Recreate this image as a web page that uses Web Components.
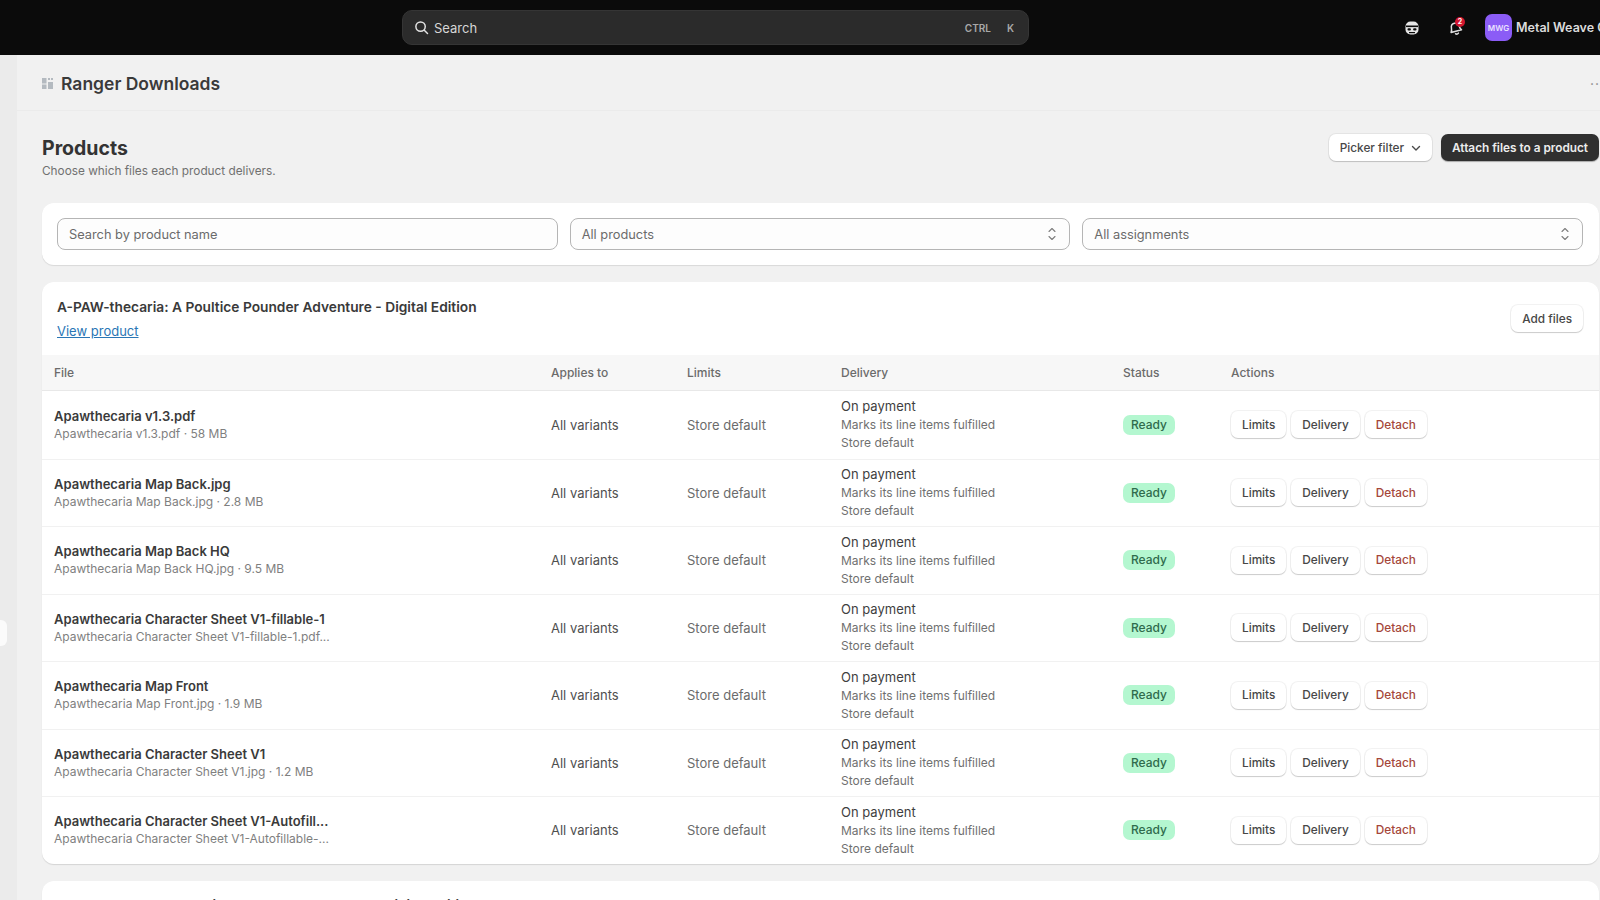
<!DOCTYPE html>
<html lang="en">
<head>
<meta charset="utf-8">
<title>Ranger Downloads</title>
<style>
    html, body { margin: 0; height: 100%; overflow: hidden; background: #f1f1f1; }
    body { font-family: Inter, "Liberation Sans", sans-serif; color: #303030; }
</style>
</head>
<body>
<app-shell>
    <top-bar slot="top"></top-bar>
    <page-header title="Ranger Downloads"></page-header>
    <page-title></page-title>
    <filter-bar></filter-bar>
    <product-card id="first" title="A-PAW-thecaria: A Poultice Pounder Adventure - Digital Edition"></product-card>
    <product-card title="ABC: An Unlabeled Subject, Dungeon Monsters - Digital Edition"></product-card>
</app-shell>

<script>
const ICONS = {
    search: '<svg width="15" height="15" viewBox="0 0 16 16" fill="none" stroke="#e3e3e3" stroke-width="1.6" stroke-linecap="round"><circle cx="7" cy="7" r="5"/><path d="M11 11l3.4 3.4"/></svg>',
    chevron: '<svg width="10" height="10" viewBox="0 0 10 10" fill="none" stroke="#4a4a4a" stroke-width="1.4" stroke-linecap="round" stroke-linejoin="round"><path d="M1.5 3.5L5 7l3.5-3.5"/></svg>',
    updown: '<svg width="10" height="16" viewBox="0 0 10 16" fill="none" stroke="#7d7d7d" stroke-width="1.1" stroke-linecap="round" stroke-linejoin="round"><path d="M2 5.5L5 2.5l3 3M2 10.5l3 3 3-3"/></svg>',
    mask: '<svg width="16" height="16" viewBox="0 0 16 16"><rect x="1.5" y="1.5" width="13" height="13" rx="5" fill="#e6e6e6"/><rect x="2" y="5.5" width="12" height="1.6" fill="#0b0b0b"/><rect x="3.5" y="8.2" width="3.4" height="2.2" rx="1" fill="#0b0b0b"/><rect x="9.1" y="8.2" width="3.4" height="2.2" rx="1" fill="#0b0b0b"/><rect x="5" y="12" width="6" height="1.2" fill="#0b0b0b"/></svg>',
    bell: '<svg width="17" height="17" viewBox="0 0 17 17" fill="none" stroke="#dedede" stroke-width="1.5" stroke-linejoin="round" stroke-linecap="round" style="transform: rotate(-14deg)"><path d="M3 12.2c1-1.2 1.3-2.2 1.4-4 .1-2.4 1.8-4 4-4s3.9 1.6 4 4c.1 1.8.4 2.8 1.4 4z"/><path d="M7 14.6c.8.7 2.2.7 3 0"/></svg>',
    store: '<svg width="13" height="13" viewBox="0 0 13 13" fill="#b4bac0"><rect x="1" y="1" width="4.5" height="5.5"/><rect x="7" y="1" width="2" height="2"/><rect x="10" y="1" width="2" height="2"/><rect x="1" y="7.5" width="4.5" height="4.5"/><rect x="7" y="5" width="5" height="7"/></svg>'
};

const FILES = [
    ['Apawthecaria v1.3.pdf', 'Apawthecaria v1.3.pdf · 58 MB'],
    ['Apawthecaria Map Back.jpg', 'Apawthecaria Map Back.jpg · 2.8 MB'],
    ['Apawthecaria Map Back HQ', 'Apawthecaria Map Back HQ.jpg · 9.5 MB'],
    ['Apawthecaria Character Sheet V1-fillable-1', 'Apawthecaria Character Sheet V1-fillable-1.pdf...'],
    ['Apawthecaria Map Front', 'Apawthecaria Map Front.jpg · 1.9 MB'],
    ['Apawthecaria Character Sheet V1', 'Apawthecaria Character Sheet V1.jpg · 1.2 MB'],
    ['Apawthecaria Character Sheet V1-Autofill...', 'Apawthecaria Character Sheet V1-Autofillable-...']
];

// same columns for the head and the rows
const COLUMNS = 'grid-template-columns: 497px 136px 154px 282px 108px 1fr;';

class AppShell extends HTMLElement {
    constructor() {
        super();
        const shadow = this.attachShadow({ mode: 'open' });
        shadow.innerHTML = `
            <style>
                :host { display: flex; flex-direction: column; height: 900px; overflow: hidden; }
                .body { display: flex; flex: 1; min-height: 0; }
                .rail { width: 17px; flex: none; background: #ebebeb; display: flex; flex-direction: column; }
                .rail i { display: block; width: 7px; height: 26px; margin-top: 565px; background: #fbfbfb; border-radius: 0 6px 6px 0; }
                main { flex: 1; min-width: 0; }
            </style>
            <slot name="top"></slot>
            <div class="body">
                <div class="rail"><i></i></div>
                <main><slot></slot></main>
            </div>
        `;
    }
}

class TopBar extends HTMLElement {
    constructor() {
        super();
        const shadow = this.attachShadow({ mode: 'open' });
        shadow.innerHTML = `
            <style>
                :host { display: flex; align-items: center; height: 55px; background: #0b0b0b; padding-left: 402px; overflow: hidden; }
                .search { width: 627px; height: 35px; box-sizing: border-box; flex: none; display: flex; align-items: center; gap: 5px;
                    padding: 0 14px 0 11px; background: #2b2b2b; border: 1px solid #353535; border-radius: 10px; color: #d6d6d6; font-size: 13px; }
                .search span { flex: 1; }
                kbd { font: 600 10px Inter, "Liberation Sans", sans-serif; color: #a8a8a8; margin-left: 11px; }
                .end { display: flex; align-items: center; margin-left: 375px; flex: none; }
                .bell { position: relative; display: flex; margin-left: 27px; }
                .bell b { position: absolute; top: -2px; left: 8px; width: 10px; height: 10px; border-radius: 50%; background: #d3162f;
                    color: #fff; font-size: 7px; line-height: 10px; text-align: center; }
                .avatar { width: 27px; height: 27px; margin-left: 21px; border-radius: 7px; background: #8b5cf6; color: #e9e0ff;
                    font-size: 8px; font-weight: 600; display: flex; align-items: center; justify-content: center; }
                .shop { margin-left: 4px; color: #dcdcdc; font-size: 12.5px; font-weight: 600; white-space: nowrap; }
            </style>
            <div class="search">
                ${ICONS.search}
                <span>Search</span>
                <kbd>CTRL</kbd><kbd>K</kbd>
            </div>
            <div class="end">
                ${ICONS.mask}
                <div class="bell">${ICONS.bell}<b>2</b></div>
                <div class="avatar">MWG</div>
                <div class="shop">Metal Weave Games</div>
            </div>
        `;
    }
}

class PageHeader extends HTMLElement {
    constructor() {
        super();
        const shadow = this.attachShadow({ mode: 'open' });
        shadow.innerHTML = `
            <style>
                :host { display: flex; align-items: center; height: 56px; box-sizing: border-box; padding: 2px 0 0 24px; border-bottom: 1px solid #ebebeb; margin-bottom: 24px; }
                .icon { display: flex; width: 13px; }
                h1 { margin: 0 0 0 7px; font-size: 17.5px; font-weight: 600; color: #3a3a3a; }
                .more { margin-left: auto; margin-right: -5px; color: #8a8a8a; font-size: 14px; letter-spacing: 1px; line-height: 1; }
            </style>
            <div class="icon">${ICONS.store}</div>
            <h1></h1>
            <div class="more">···</div>
        `;
        shadow.querySelector('h1').textContent = this.getAttribute('title');
    }
}

class UiButton extends HTMLElement {
    constructor() {
        super();
        const shadow = this.attachShadow({ mode: 'open' });
        shadow.innerHTML = `
            <style>
                :host { display: inline-flex; }
                button { display: flex; align-items: center; gap: 7px; height: 27px; padding: 0 11px; background: #fff; color: #474747;
                    border: 0; border-radius: 7px; font: 500 11.8px Inter, "Liberation Sans", sans-serif; white-space: nowrap;
                    box-shadow: 0 1px 1px rgba(0,0,0,.16), 0 0 0 1px rgba(0,0,0,.05); cursor: pointer; }
                :host([tone="primary"]) button { background: #303030; color: #ececec; box-shadow: 0 1px 1px rgba(0,0,0,.3); font-weight: 600; }
                :host([tone="danger"]) button { color: #a5473a; }
            </style>
            <button><slot></slot></button>
        `;
    }
}

class PageTitle extends HTMLElement {
    constructor() {
        super();
        const shadow = this.attachShadow({ mode: 'open' });
        shadow.innerHTML = `
            <style>
                :host { display: flex; justify-content: space-between; padding: 0 1px 0 25px; height: 68px; }
                h2 { margin: 0; font-size: 19.5px; line-height: 26px; font-weight: 700; color: #333; }
                p { margin: 2px 0 0; font-size: 11.8px; line-height: 16px; color: #707070; }
                .acts { display: flex; gap: 9px; margin-top: -1px; }
            </style>
            <div>
                <h2>Products</h2>
                <p>Choose which files each product delivers.</p>
            </div>
            <div class="acts">
                <ui-button>Picker filter ${ICONS.chevron}</ui-button>
                <ui-button tone="primary">Attach files to a product</ui-button>
            </div>
        `;
    }
}

class FilterField extends HTMLElement {
    constructor() {
        super();
        const shadow = this.attachShadow({ mode: 'open' });
        const select = this.hasAttribute('select');
        shadow.innerHTML = `
            <style>
                :host { display: flex; align-items: center; justify-content: space-between; flex: 1; min-width: 0; height: 32px; box-sizing: border-box;
                    padding: 0 12px 0 11px; background: #fdfdfd; border: 1px solid #b5b5b5; border-radius: 8px; font-size: 12.8px; color: #6b6b6b; }
                svg { display: block; }
            </style>
            <slot></slot>
            ${select ? ICONS.updown : ''}
        `;
    }
}

class FilterBar extends HTMLElement {
    constructor() {
        super();
        const shadow = this.attachShadow({ mode: 'open' });
        shadow.innerHTML = `
            <style>
                :host { display: flex; gap: 12px; margin: 0 1px 17px 25px; padding: 15px 16px 15px 15px; background: #fff; border-radius: 12px;
                    box-shadow: 0 1px 1px rgba(0,0,0,.1); }
            </style>
            <filter-field>Search by product name</filter-field>
            <filter-field select>All products</filter-field>
            <filter-field select>All assignments</filter-field>
        `;
    }
}

class StatusBadge extends HTMLElement {
    constructor() {
        super();
        const shadow = this.attachShadow({ mode: 'open' });
        shadow.innerHTML = `
            <style>
                :host { display: inline-block; padding: 0 8px; height: 20px; line-height: 20px; background: #b4f7d0; color: #2f6b4c;
                    border-radius: 7px; font-size: 12px; font-weight: 500; }
            </style>
            <slot></slot>
        `;
    }
}

class FileRow extends HTMLElement {
    constructor() {
        super();
        const shadow = this.attachShadow({ mode: 'open' });
        shadow.innerHTML = `
            <style>
                :host { display: grid; ${COLUMNS} align-items: center; height: 67.5px; box-sizing: border-box; padding-left: 12px; border-top: 1px solid #f1f1f1; font-size: 13px; color: #4f4f4f; }
                :host(:first-child) { border-top: 0; }
                .name { font-size: 13px; line-height: 18px; font-weight: 600; color: #3a3a3a; white-space: nowrap; }
                .sub { font-size: 12px; line-height: 18px; color: #7f7f7f; white-space: nowrap; }
                .limits { color: #6b6b6b; }
                .delivery div { font-size: 12px; line-height: 18px; color: #707070; }
                .delivery div:first-child { font-size: 13px; line-height: 19px; color: #3f3f3f; }
                .actions { display: flex; gap: 5px; }
            </style>
            <div>
                <div class="name"></div>
                <div class="sub"></div>
            </div>
            <div>All variants</div>
            <div class="limits">Store default</div>
            <div class="delivery">
                <div>On payment</div>
                <div>Marks its line items fulfilled</div>
                <div>Store default</div>
            </div>
            <div><status-badge>Ready</status-badge></div>
            <div class="actions">
                <ui-button>Limits</ui-button>
                <ui-button>Delivery</ui-button>
                <ui-button tone="danger">Detach</ui-button>
            </div>
        `;
    }

    // attributes are not there yet in the constructor when made with createElement
    connectedCallback() {
        this.shadowRoot.querySelector('.name').textContent = this.getAttribute('name');
        this.shadowRoot.querySelector('.sub').textContent = this.getAttribute('sub');
    }
}

class ProductCard extends HTMLElement {
    constructor() {
        super();
        const shadow = this.attachShadow({ mode: 'open' });
        shadow.innerHTML = `
            <style>
                :host { display: block; margin: 0 1px 17px 25px; background: #fff; border-radius: 12px; overflow: hidden; box-shadow: 0 1px 1px rgba(0,0,0,.12); }
                header { display: flex; align-items: center; justify-content: space-between; height: 73px; box-sizing: border-box; padding: 0 16px 0 15px; }
                h3 { margin: 0 0 4px; font-size: 13.75px; line-height: 18px; font-weight: 600; color: #3a3a3a; }
                a { font-size: 13px; line-height: 18px; color: #2a76b5; text-decoration: underline; }
                .head { display: grid; ${COLUMNS} align-items: center; height: 36px; box-sizing: border-box; padding-left: 12px; background: #f7f7f7;
                    border-bottom: 1px solid #e8e8e8; font-size: 12px; font-weight: 500; color: #6b6b6b; }
            </style>
            <header>
                <div>
                    <h3></h3>
                    <a href="#">View product</a>
                </div>
                <ui-button>Add files</ui-button>
            </header>
            <div class="head">
                <div>File</div><div>Applies to</div><div>Limits</div><div>Delivery</div><div>Status</div><div>Actions</div>
            </div>
            <div class="rows"></div>
        `;
        shadow.querySelector('h3').textContent = this.getAttribute('title');
        if (this.id === 'first') {
            const rows = shadow.querySelector('.rows');
            FILES.forEach(([name, sub]) => {
                const row = document.createElement('file-row');
                row.setAttribute('name', name);
                row.setAttribute('sub', sub);
                rows.appendChild(row);
            });
        }
    }
}

customElements.define('ui-button', UiButton);
customElements.define('status-badge', StatusBadge);
customElements.define('file-row', FileRow);
customElements.define('filter-field', FilterField);
customElements.define('filter-bar', FilterBar);
customElements.define('page-title', PageTitle);
customElements.define('page-header', PageHeader);
customElements.define('product-card', ProductCard);
customElements.define('top-bar', TopBar);
customElements.define('app-shell', AppShell);
</script>
</body>
</html>
